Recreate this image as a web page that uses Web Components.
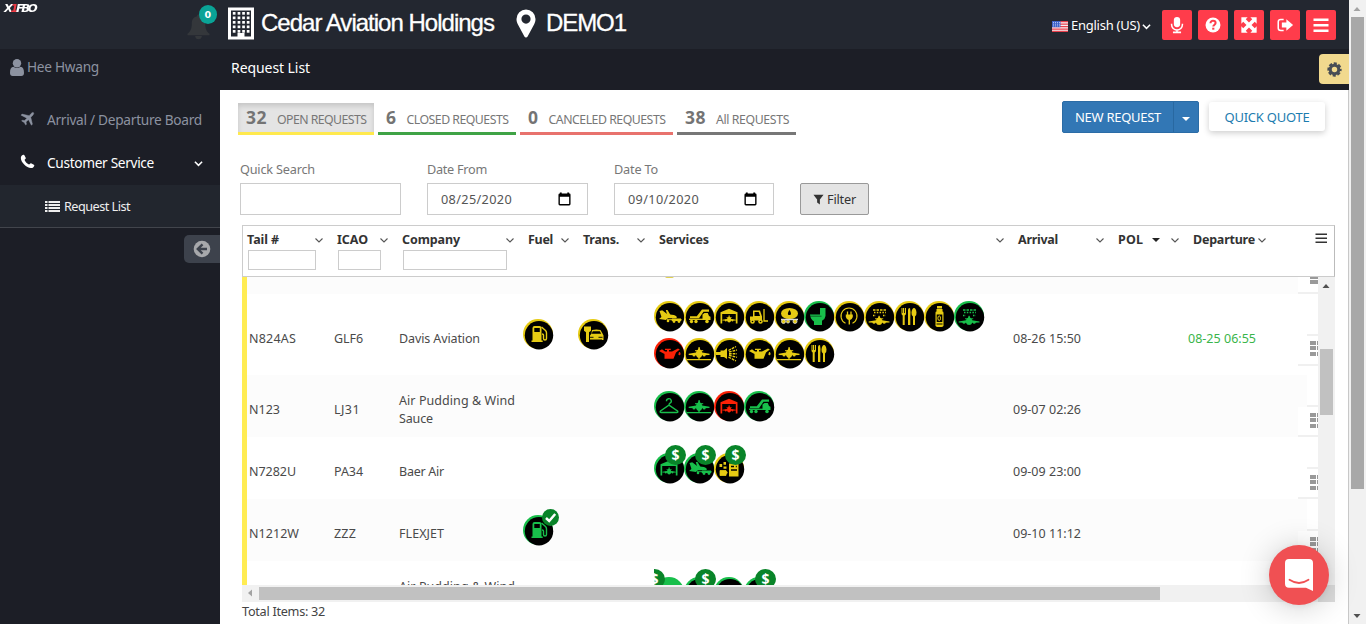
<!DOCTYPE html>
<html lang="en">
<head>
<meta charset="utf-8">
<title>Request List</title>
<style>
html,body{margin:0;height:624px;overflow:hidden;background:#fff}
body{font-family:"Noto Sans","Open Sans",sans-serif;font-size:13px;color:#444}
</style>
</head>
<body>
<fbo-app></fbo-app>
<script>
const define=(name,render,after)=>customElements.define(name,class extends HTMLElement{
  connectedCallback(){
    if(this.shadowRoot)return;
    this.attachShadow({mode:'open'}).innerHTML=render(this);
    if(after)after(this);
  }
});

/* Single-line label tracked to an exact width */
define('fit-text',()=>`<style>:host{display:inline-block;white-space:pre;flex:none}span{display:inline-block}</style><span><slot></slot></span>`,el=>{
  const w=+el.getAttribute('w'),s=el.shadowRoot.querySelector('span');
  if(!w)return;
  el.style.width=w+'px';
  s.style.letterSpacing=((w-s.getBoundingClientRect().width)/el.textContent.length)+'px';
});

/* Monochrome glyphs: [viewBox, markup] */
const G={
bell:['0 0 24 26','<path fill="currentColor" d="M12 0c1 0 1.600.7 1.600 1.700C17.500 2.500 19 5.700 19 9c0 6 1.500 8.500 4.500 11v1.500H.5V20C3.500 17.500 5 15 5 9c0-3.300 1.500-6.500 5.400-7.300C10.400.7 11 0 12 0zM8.500 22.300h7c0 2-1.500 3.500-3.500 3.500s-3.500-1.500-3.500-3.500z"/>'],
building:['0 0 26 32','<path fill="currentColor" fill-rule="evenodd" d="M0 0H26V32H0zM3 3V29H9.500V25.500H16.500V29H23V3z"/><g fill="currentColor">'+[4.500,9,13.500,18,22.500].map(y=>[4.800,9.600,14.200,18.800].map(x=>`<rect x="${x}" y="${y}" width="2.700" height="2.700"/>`).join('')).join('')+'</g>'],
pin:['0 0 20 28','<path fill="currentColor" fill-rule="evenodd" d="M10 0a9.500 9.500 0 0 1 9.500 9.500c0 2-.5 3.500-1.300 5.200L11.600 27c-.6 1.200-2.600 1.200-3.200 0L1.800 14.700C1 13 .5 11.500.5 9.500A9.500 9.500 0 0 1 10 0zm0 5a4.600 4.600 0 1 0 0 9.200A4.600 4.600 0 0 0 10 5z"/>'],
mic:['0 0 20 20','<rect x="6.500" y="1" width="7" height="11.500" rx="3.500" fill="currentColor"/><path fill="none" stroke="currentColor" stroke-width="1.700" d="M4 8.500v1.200a6 6 0 0 0 12 0V8.500M10 15.500V18M5.500 18.200h9"/>'],
help:['0 0 20 20','<circle cx="10" cy="10" r="8.300" fill="currentColor"/><path d="M7.200 8C7.200 6.200 8.400 5.300 10 5.300s2.900 1 2.900 2.500c0 1.800-2.600 1.900-2.600 4" fill="none" stroke="#ff3c4b" stroke-width="2.200"/><rect x="9.100" y="13" width="2.400" height="2.200" fill="#ff3c4b"/>'],
expand:['0 0 20 20','<path fill="currentColor" d="M1.500 1.500h7L6.400 3.600 10 7.200l3.600-3.600-2.100-2.100h7v7l-2.100-2.100L12.800 10l3.600 3.600 2.100-2.100v7h-7l2.100-2.100L10 12.800l-3.600 3.600 2.100 2.100h-7v-7l2.100 2.100L7.200 10 3.600 6.400 1.500 8.500z"/>'],
exit:['0 0 20 20','<path fill="none" stroke="currentColor" stroke-width="1.700" d="M8.500 4H5.300Q2.500 4 2.500 6.300v7.400Q2.500 16 5.300 16H8.500"/><path fill="currentColor" d="M6.500 7.300h5V3.500L19 10l-7.500 6.500v-3.800h-5z"/>'],
bars:['0 0 20 20','<path stroke="currentColor" stroke-width="2.500" d="M2.500 4.700h15M2.500 10.200h15M2.500 15.700h15"/>'],
gear:['0 0 20 20','<path fill="none" stroke="currentColor" stroke-width="4" stroke-dasharray="3.300 1.727" stroke-dashoffset="1.650" d="M16.400 10a6.400 6.400 0 1 1-12.800 0a6.400 6.400 0 1 1 12.800 0"/><circle cx="10" cy="10" r="5" fill="none" stroke="currentColor" stroke-width="3.600"/>'],
user:['0 0 14 17','<path fill="currentColor" d="M0 14c0-4 1-6 3.500-6.200 2 1.700 5 1.700 7 0C13 8 14 10 14 14c0 2-1 3-2.700 3H2.700C1 17 0 16 0 14z"/><circle cx="7" cy="4.200" r="4.200" fill="currentColor"/>'],
plane:['0 0 16 16','<path fill="currentColor" stroke="currentColor" stroke-width=".5" d="M15.300.7c.9.900.2 2.200-.8 3.200L12.300 6l1.900 8-1.200 1-3.300-6.200-2.800 2.700.5 2.600-.9.800-1.700-3-3-1.700.8-.8 2.600.4L7.900 7 1.200 3.600 2.300 2.400l8.200 1.800 2-2.300c1-1 2.100-1.900 2.800-1.200z"/>'],
phone:['0 0 16 16','<path fill="currentColor" d="M3.500.8C4 .6 4.400.7 4.700 1.300l1.500 3c.4.800-1.400 1.600-1.300 2.200.5 1.700 3 4.200 4.700 4.700.6.100 1.300-1.700 2.200-1.300l3 1.600c.5.300.6.600.4 1.100-.6 1.800-1.800 2.500-3.500 2.400C6.900 14.800 1 9 .9 4.300.9 2.600 1.700 1.400 3.500.8z"/>'],
chev:['0 0 10 10','<path fill="none" stroke="currentColor" stroke-width="1.700" d="M1 3l4 4 4-4"/>'],
chevs:['0 0 10 10','<path fill="none" stroke="currentColor" stroke-width="1.100" d="M1.500 3.500L5 7l3.500-3.500"/>'],
list:['0 0 15 13','<path stroke="currentColor" stroke-width="2" d="M0 2h2.500M3.500 2H15M0 5h2.500M3.500 5H15M0 8h2.500M3.500 8H15M0 11h2.500M3.500 11H15"/>'],
back:['0 0 18 18','<circle cx="9" cy="9" r="8.300" fill="currentColor"/><path fill="none" stroke="#3d424c" stroke-width="2.400" d="M14 9H5.500M9.500 4.300L4.800 9l4.700 4.700"/>'],
cal:['0 0 14 14','<path fill="currentColor" fill-rule="evenodd" d="M2 1V0h2v1h6V0h2v1h.500Q13.500 1 13.500 2.500v10q0 1.500-1.500 1.500H2Q.5 14 .5 12.500v-10Q.5 1 2 1zM2 4.500v8h10v-8z"/>'],
filter:['0 0 12 12','<path fill="currentColor" d="M.5.800h11L7.500 6v5.500L4.500 9.200V6z"/>'],
menu:['0 0 12 12','<path stroke="currentColor" stroke-width="1.600" d="M.5 2.200h11.500M.5 6.200h11.500M.5 10.200h11.500"/>'],
caret:['0 0 10 10','<path fill="currentColor" d="M1 3h8L5 7z"/>'],
up:['0 0 10 10','<path fill="currentColor" d="M1.500 7h7L5 3z"/>'],
left:['0 0 10 10','<path fill="currentColor" d="M7 1.500v7L3 5z"/>'],
flag:['0 0 16 11','<path fill="#f4f0f4" d="M0 0h16v11H0z"/><path stroke="#e8404c" stroke-width="1.200" d="M0 .600h16M0 3.100h16M0 5.600h16M0 8.100h16M0 10.400h16"/><path fill="#3c62c8" d="M0 0h8.500v6.200H0z"/><path stroke="#cbd8ff" stroke-width=".8" stroke-dasharray="1 1" d="M1 1.500h7M1 3.200h7M1 4.900h7"/>'],
chat:['0 0 28 32','<path fill="#fff" d="M4 0h20q4 0 4 4v28l-7-3.200H4q-4 0-4-4V4q0-4 4-4z"/><path d="M4.500 20.800q9.500 6.400 19 0" fill="none" stroke="#f05053" stroke-width="1.800" stroke-linecap="round"/>']
};
define('ui-glyph',el=>{const[v,m]=G[el.getAttribute('name')];return `<style>:host{display:inline-flex;flex:none;width:${el.getAttribute('w')||14}px;height:${el.getAttribute('h')||el.getAttribute('w')||14}px}svg{width:100%;height:100%;overflow:visible}</style><svg viewBox="${v}">${m}</svg>`});

/* Service artwork drawn inside a 30x30 disc; C is replaced by the status colour */
const front='<path d="M14.600 9h1l.6 2.500q1.800.8 2 3l7.300 1.300v1.200l-7.300.3q-.7 2.600-3.100 2.700-2.400-.1-3.100-2.700l-7.300-.3v-1.200l7.300-1.300q.2-2.200 2-3z"/><path d="M11 12.200h8.200v1H11z"/><circle cx="10" cy="17" r="1.500"/><circle cx="20.200" cy="17" r="1.500"/>';
const S={
fuel:'<path fill-rule="evenodd" d="M9.500 9q0-2 2-2h5q2 0 2 2v12.500h1.200V23H8.500v-1.500h1zM11.300 9v4h5.500V9z"/><path d="M18.500 8l4 3.500q1 1 1 2.500v5.500q0 1.500-1.500 1.500t-1.500-1.500V16q0-1-1.500-1" fill="none" stroke="C" stroke-width="1.400"/>',
car:'<path d="M6 7.500h7v4.200l-2 1.500V23H8V13.200L6 11.700z"/><path d="M14 11q4.500-1.200 8.500 0l2 3.500 1 2v4.500H12v-4.500l1.500-2z" fill="C"/><path d="M14.800 12.300h7l1.400 2.400h-9.700z" fill="#000"/><path d="M11.500 18.300h4M20.500 18.300h4M12 21h12" stroke="#000" stroke-width=".9"/>',
cargo:'<path d="M5.500 10l2.700-.8 5.300 4 6.500.8q2.500.7 3 2.200l-1 1H12l-4.500-1.200z"/><path d="M16.500 14l-3-5h-1.700l1.500 5zM8 15.500l8-.6-4 4-7-.8z"/><path d="M13 18.700h5M18 18h9v1.500h-9z" stroke="C"/><circle cx="14" cy="20" r="1.300"/><circle cx="20" cy="20.500" r="1.400"/><circle cx="25" cy="20.500" r="1.400"/>',
stairs:'<path d="M6 15.200h6.800L18 8.600h7v2.200h-5.500L15 17.300H6z"/><path d="M18.500 13.500l2-1.500h3.300l1.200 3 1.500.7v3.300h-8z"/><path d="M5 18.300h21" stroke="C" stroke-width="1.300"/><circle cx="7.500" cy="20.500" r="1.700"/><circle cx="12" cy="20.500" r="1.700"/><circle cx="23" cy="20.500" r="1.800"/>',
hangar:'<path d="M6.500 22.500V11.300L15 7.800l8.500 3.500v11.200h-1.700V13H8.200v9.500z"/><g transform="translate(5.300 8.500) scale(.65)">'+front+'</g>',
lift:'<path d="M9 9.500h7l2 6v4H6v-4h3z"/><path d="M10.500 11h4.200l1.300 4h-5.500z" fill="#000"/><path d="M20 8v12h4" fill="none" stroke="C" stroke-width="1.300"/><circle cx="8.500" cy="20.500" r="2.300"/><circle cx="16.500" cy="20.500" r="2.300"/><circle cx="8.500" cy="20.500" r=".8" fill="#000"/><circle cx="16.500" cy="20.500" r=".8" fill="#000"/>',
tank:'<ellipse cx="15.500" cy="12.500" rx="8.500" ry="5.500"/><path d="M15.500 9c2 3 2 5-.1 5s-2-2 .1-5z" fill="#000"/><path d="M7 18.500h17" stroke="#ddd" stroke-width="1.500"/><g stroke="#ddd" stroke-width=".8"><circle cx="9.500" cy="20.500" r="2"/><circle cx="14" cy="20.500" r="1.600"/><circle cx="21" cy="20.500" r="2"/></g>',
toilet:'<path d="M16 7h5.500v8q-.5 3.500-3.500 4.700V24h-8v-3.500Q6.500 18.500 6 13.500h10z"/><path d="M6 15.200h11.500" stroke="#000" stroke-width=".5"/>',
plug:'<path d="M11.500 22.200a8 8 0 1 1 7 0" fill="none" stroke="C" stroke-width="1.100"/><path d="M13.500 10.500v4M17 10.500v4" stroke="C" stroke-width="1.300"/><path d="M11.800 13.500h7v2.500q-.8 2.500-2.800 3v4.500h-1.400V19q-2-.5-2.800-3z"/>',
deice:'<g fill="none" stroke="C" stroke-width="1.300"><path d="M9 9h13" stroke-dasharray="2.500 1"/><path d="M10 11.500h12M9 14.500h3M19 14.500h3" stroke-dasharray="1.500 1.300"/></g><g transform="translate(0 7) scale(1 .85)">'+front+'</g>',
food:'<path d="M7.500 7v5.500q0 1.500 1.200 2V24h2v-9.500q1.300-.5 1.300-2V7h-1v5h-.8V7H9v5h-.5V7zM14 24V9q0-2 2-2 1 4 .300 9V24zM19 24v-8.500q-1.700-1-1.500-4Q18 7 20 7t2.500 4.500q.2 3-1.500 4V24z"/>',
oxygen:'<path d="M13 5h5v2.500h-5zM12.500 8h6v2h-6z"/><rect x="11.500" y="10" width="8" height="16" rx="1.800"/><rect x="12.700" y="13.500" width="5.600" height="7.500" fill="#000"/><ellipse cx="15.200" cy="17.200" rx="1.300" ry="2.300" fill="none" stroke="C"/><path d="M12.500 23h6" stroke="#000"/>',
oil:'<path d="M5 13l3-1.700 3 2.200h2V12h-2v-1.200h5.800V12h-1.800v1.500H18l6-3 1.800 1-3.800 3-2.500 6.300H10.500V16z"/><path d="M25.500 14q1.500 2.500 0 3t0-3z" stroke="C" stroke-width=".7"/>',
front:front+'<path d="M3 21.700h24M15 18v3" stroke="C" stroke-width="1.300"/>',
spray:'<path d="M1.500 14h5v-1.500H10L13 10v11l-3-2H6.500v-2h-5z"/><path d="M14.500 12.500L22 8.500M15 14l8-2M15 15.700h8M15 17.300l8 2M14.500 19L22 23" stroke="C" stroke-width="1.400" stroke-dasharray="2.700 1"/>',
hanger:'<path d="M12.500 10.200a2.400 2.400 0 1 1 3.500 2q-1 .5-1 2L6.500 20q-1 1.500.8 1.500h15.400q1.800 0 .8-1.500L15 14.200" fill="none" stroke="C" stroke-width="1.400"/>',
coffee:'<path d="M6 17.500h6v5H6zM12 18.500q2.500 0 0 3" stroke="C" stroke-width=".8"/><path d="M5.500 11h2.700v3H5.500zM9.500 9h2.500v2.700H9.500zM9.500 13.500h3v2.300h-3zM15 10.500h9.500v13H15z"/><path d="M17 13.500h3M17 17h6M21.800 13.500h1" stroke="#000" stroke-width="1.500"/>',
solid:''
};
const COL={y:'#e6cb13',g:'#18bf4b',r:'#fb2106'};
define('service-badge',el=>{
  const c=COL[el.getAttribute('c')],k=el.getAttribute('k'),m=el.getAttribute('m');
  const mark=m==='$'||m==='<'?`<i class="m"${m==='<'?' style="left:-10px"':''}>$</i>`:m==='v'?'<i class="m v"><svg viewBox="0 0 17 17"><path d="M4 9l3.200 3 6-7" fill="none" stroke="#fff" stroke-width="2.500"/></svg></i>':'';
  return `<style>:host{display:block;position:relative;flex:none;width:30px;height:30px;margin-bottom:7px}
  .a{display:block;width:31px;height:31px;overflow:visible}
  .m{position:absolute;left:11px;top:-8px;width:21px;height:20px;border-radius:50%;background:#098429;color:#fff;font:700 14px/20px "Noto Sans",sans-serif;text-align:center;z-index:2}
  .v{left:19px;top:-6px;width:17px;height:17px}.v svg{display:block}</style>
  <svg class="a" viewBox="0 0 31 31"><circle cx="15" cy="15" r="15" fill="${c}"/><circle cx="16" cy="16.200" r="14.200" fill="${k==='solid'?c:'#000'}"/><g fill="${c}">${S[k].replaceAll('"C"',`"${c}"`)}</g></svg>${mark}`;
});
const badges=s=>s?s.split(' ').map(t=>{const[k,c,m]=t.split(':');return `<service-badge k="${k}" c="${c}" m="${m||''}"></service-badge>`}).join(''):'';

define('top-bar',()=>`<style>
:host{display:flex;height:49px;background:#232730;color:#fff;align-items:flex-start}
.logo{width:187px;padding:2px 0 0 4px;box-sizing:border-box;font:italic 900 9px/12px "DejaVu Sans",sans-serif}
.logo fit-text{transform:scale(1.300,1.150);transform-origin:0 0} .logo b{color:#ef3b45;font-weight:inherit}
.bell{position:relative;width:41px;color:#34373b}.bell ui-glyph{margin-top:14px}
.n{position:absolute;left:11.500px;top:5px;width:18.500px;height:19px;border-radius:50%;background:#0aa396;color:#fff;font:700 9.500px/19px "DejaVu Sans",sans-serif;text-align:center}
.t{font:24px/28px "Liberation Sans",sans-serif;margin-top:9px;-webkit-text-stroke:.3px #fff}
.lang{display:flex;align-items:center;height:20px;margin:16px 11px 0 auto;font-size:13px}
.btns{display:flex;gap:6px;margin:10px 13px 0 0}
.btns span{width:30px;height:30px;border-radius:2px;background:#ff3c4b;display:grid;place-items:center}
</style><div class="logo"><fit-text w="34">X<b>1</b>FBO</fit-text></div>
<div class="bell"><ui-glyph name="bell" w="23" h="26"></ui-glyph><span class="n">0</span></div>
<ui-glyph name="building" w="26" h="33" style="margin-top:7px"></ui-glyph>
<fit-text class="t" w="233" style="margin-left:7px">Cedar Aviation Holdings</fit-text>
<ui-glyph name="pin" w="20" h="29" style="margin:9px 0 0 22px"></ui-glyph>
<fit-text class="t" w="80" style="margin-left:10px">DEMO1</fit-text>
<div class="lang"><ui-glyph name="flag" w="16" h="11"></ui-glyph><fit-text w="69" style="margin:-2px 2px 0 3px">English (US)</fit-text><ui-glyph name="chev" w="9"></ui-glyph></div>
<div class="btns">${['mic','help','expand','exit','bars'].map(n=>`<span><ui-glyph name="${n}" w="${n==='bars'?20:18}"></ui-glyph></span>`).join('')}</div>`);

define('side-nav',()=>`<style>
:host{display:block;width:220px;height:575px;background:#1c1e26;color:#8c92a0;font-size:13.700px;line-height:20px}
.u{display:flex;align-items:center;height:37px;box-sizing:border-box;padding-left:10px;gap:3px;margin-bottom:12px}
.u fit-text{margin-top:-1px}
.i{display:flex;align-items:center;height:43px;padding:0 17px 0 20px;gap:12px}
.i ui-glyph{margin-top:-2px}.i .c{margin-top:1px}
.on{color:#fff}.on .c{margin-left:auto}
.sub{height:43px;box-sizing:border-box;display:flex;align-items:center;padding-left:45px;gap:4px;background:#22262e;border-bottom:1px solid #42454c;color:#eee;font-size:12.700px;margin-top:1px}
.tg{width:36px;height:28px;border-radius:5px 0 0 5px;background:#3d424c;color:#a7a8ab;margin:7px 0 0 auto;display:grid;place-items:center}
</style><div class="u"><ui-glyph name="user" w="14" h="17"></ui-glyph><fit-text w="72">Hee Hwang</fit-text></div>
<div class="i"><ui-glyph name="plane" w="14"></ui-glyph><fit-text w="155" style="margin-left:1px">Arrival / Departure Board</fit-text></div>
<div class="i on"><ui-glyph name="phone" w="15"></ui-glyph><fit-text w="107">Customer Service</fit-text><ui-glyph class="c" name="chev" w="9"></ui-glyph></div>
<div class="sub"><ui-glyph name="list" w="15" h="13"></ui-glyph><fit-text w="66">Request List</fit-text></div>
<div class="tg"><ui-glyph name="back" w="18"></ui-glyph></div>`);

define('title-bar',()=>`<style>
:host{display:flex;justify-content:space-between;height:41px;background:#1c1e26;color:#fff;font-size:14px;line-height:20px}
fit-text{margin:9px 0 0 11px}
.g{width:30px;height:30px;margin-top:5px;border-radius:4px 0 0 4px;background:#f1d98e;color:#484d55;display:grid;place-items:center}
</style><fit-text w="79">Request List</fit-text><div class="g"><ui-glyph name="gear" w="17"></ui-glyph></div>`);

define('count-tab',el=>{const a=n=>el.getAttribute(n);return `<style>
:host{display:flex;box-sizing:border-box;width:${a('w')}px;height:32px;padding-left:8px;border-bottom:3px solid ${a('c')};color:#777;line-height:29px}
:host([on]){background:#e4e4e4;box-shadow:inset 0 3px 5px #0002}
.n{font-size:17.500px;font-weight:700;color:#747474}.t{font-size:12.300px;margin-left:10px;padding-top:2px}
</style><fit-text class="n" w="${a('nw')}">${a('n')}</fit-text><fit-text class="t" w="${a('tw')}">${a('label')}</fit-text>`});

define('request-toolbar',()=>`<style>
:host{display:flex;height:59px;padding:13px 23px 0 18px;box-sizing:border-box;gap:4px;align-items:flex-start}
.sp{flex:1}
.new{display:flex;box-sizing:border-box;width:137px;height:32px;margin:-2px 6px 0 0;background:#3277b5;border:1px solid #2b6ca6;border-radius:2px;color:#fff;line-height:31px;font-size:13px}
.new fit-text{margin-left:12px}.new i{border-left:1px solid #2868a1;margin-left:12px;width:24px;display:grid;place-items:center;padding-top:4px}
.qq{width:116px;height:29px;margin-top:-1px;border-radius:3px;box-shadow:0 2px 6px #0003;color:#1c7caf;line-height:30px;text-align:center;font-size:13px}
</style><count-tab on n="32" nw="21" w="136" tw="89.500" c="#ffe94d" label="OPEN REQUESTS"></count-tab>
<count-tab n="6" nw="10.500" w="138" tw="102" c="#3fa346" label="CLOSED REQUESTS"></count-tab>
<count-tab n="0" nw="10.500" w="153" tw="117" c="#e8726d" label="CANCELED REQUESTS"></count-tab>
<count-tab n="38" nw="21" w="119" tw="73" c="#777" label="All REQUESTS"></count-tab>
<div class="sp"></div><div class="new"><fit-text w="86">NEW REQUEST</fit-text><i><ui-glyph name="caret" w="10"></ui-glyph></i></div>
<div class="qq"><fit-text w="85">QUICK QUOTE</fit-text></div>`);

define('request-filters',()=>`<style>
:host{display:flex;gap:26px;padding:11px 0 0 20px;height:76px;box-sizing:border-box;color:#777;font-size:12.700px;line-height:18px}
.f{width:161px}.b{margin-top:5px;box-sizing:border-box;height:32px;border:1px solid #ccc;display:flex;align-items:center;justify-content:space-between;padding:0 16px 0 13px;color:#555;background:#fff}
.b ui-glyph{color:#000;margin-top:-1px}.go{width:69px;height:32px;box-sizing:border-box;margin-top:23px;border:1px solid #999;border-radius:2px;background:#e4e4e4;color:#333;display:flex;align-items:center;padding-left:12px;gap:3px}
</style><div class="f"><fit-text w="75">Quick Search</fit-text><div class="b"></div></div>
<div class="f"><fit-text w="60">Date From</fit-text><div class="b"><fit-text w="71">08/25/2020</fit-text><ui-glyph name="cal" w="13" h="14"></ui-glyph></div></div>
<div class="f" style="width:160px"><fit-text w="44">Date To</fit-text><div class="b"><fit-text w="71">09/10/2020</fit-text><ui-glyph name="cal" w="13" h="14"></ui-glyph></div></div>
<div class="go"><ui-glyph name="filter" w="11"></ui-glyph><fit-text w="29">Filter</fit-text></div>`);

const COLS='grid-template-columns:90px 65px 126px 55px 76px 359px 100px 75px 87px 1fr;';
define('grid-head',()=>`<style>
:host{display:grid;${COLS}box-sizing:border-box;height:52px;border:1px solid #ccc;border-right-color:#bbb;background:#fff;color:#333;font-weight:700;font-size:12.500px;line-height:18px}
.c{padding:5px 9px 0 4px}.r{display:flex;justify-content:space-between;align-items:center;height:18px}
.q{height:18px;border:1px solid #ccc;margin:1px 0 0 1px}
ui-glyph{color:#555}.m{padding:5px 7px 0 0;text-align:right}
</style>`+[['Tail #',32,67],['ICAO',31,42],['Company',58,103],['Fuel',25],['Trans.',36],['Services',50],['Arrival',40],['POL',25],['Departure',62]].map(([t,w,q])=>`<div class="c"><div class="r"><fit-text w="${w}">${t}</fit-text>${t==='POL'?'<ui-glyph name="caret" w="10" style="color:#222;margin-left:-2px"></ui-glyph>':''}<ui-glyph name="chevs" w="10"></ui-glyph></div>${q?`<div class="q" style="width:${q-1}px"></div>`:''}</div>`).join('')+`<div class="m"><ui-glyph name="menu" w="12" style="color:#333"></ui-glyph></div>`);

define('request-row',el=>{const a=n=>el.getAttribute(n)||'',h=+a('h');return `<style>
:host{display:grid;${COLS}grid-template-rows:${h}px;position:relative;box-sizing:border-box;height:${h}px;width:1076px;border-left:5px solid #ffec52;background:${a('bg')};color:#4a4a4a;font-size:12.500px;line-height:18px}
.c{padding-left:2px;display:flex;flex-direction:column;justify-content:center;align-items:flex-start;margin-top:${a('ty')||8}px}
.c:nth-of-type(n+2){margin-left:-5px}
.c:nth-of-type(n+5){margin-left:-7px}
.fu,.tr{margin:${a('iy')||16}px 0 0 -5.500px}
.s{display:flex;flex-wrap:wrap;align-content:flex-start;margin-left:-5px;padding-top:${a('sy')||16}px;overflow:hidden;height:100%;width:340px;box-sizing:border-box}
.top,.act{position:absolute;right:0}.top{width:11px;top:0;height:${Math.round(h/2)-1}px;border-bottom:2px solid #f0f0f0;background:#fff}
.act{width:20px;top:${Math.round(h/2)+1}px;height:28px;border-bottom:2px solid #f0f0f0;background:#fff;overflow:hidden}
.act i{position:absolute;left:12px;top:${h===81?5:6}px;width:14px;height:15px;background:repeating-linear-gradient(#999 0 4px,transparent 4px 5.300px);-webkit-mask:linear-gradient(90deg,#000 0 6px,transparent 6px 7px,#000 7px)}
</style><div class="c"><fit-text w="${a('tw')}">${a('tail')}</fit-text></div><div class="c"><fit-text w="${a('iw')}">${a('icao')}</fit-text></div>
<div class="c">${a('co').split('|').map(s=>{const[t,w]=s.split('~');return `<fit-text w="${w||0}">${t}</fit-text>`}).join('')}</div>
<div class="fu">${badges(a('fuel'))}</div><div class="tr">${badges(a('trans'))}</div><div class="s">${badges(a('sv'))}</div>
<div class="c"><fit-text w="68">${a('arr')}</fit-text></div><div></div><div class="c" style="color:#39b54a"><fit-text w="68">${a('dep')}</fit-text></div><div></div>
<div class="top"></div><div class="act"><i></i></div>`});

define('scroll-bar',el=>{const a=n=>el.getAttribute(n),v=!el.hasAttribute('horizontal');return `<style>
:host{display:flex;box-sizing:border-box;flex-direction:${v?'column':'row'};${v?'width:17px':'height:17px'};background:#f1f1f1;color:#505050}
ui-glyph{margin:${v?'4px 4px 3px 3px':'3px 4px 4px 3px'}}
b{background:${a('c')||'#c1c1c1'};${v?`width:13px;margin-left:2px;margin-top:${a('o')}px;height:${a('l')}px`:`height:13px;margin-top:2px;margin-left:${a('o')}px;width:${a('l')}px`}}
.d{margin-top:auto;transform:scaleY(-1)}
</style><ui-glyph name="${v?'up':'left'}" w="10" style="color:${a('ac')||'#505050'}"></ui-glyph><b></b>${v&&a('down')!==null?'<ui-glyph class="d" name="up" w="10"></ui-glyph>':''}`});

define('request-grid',()=>`<style>
:host{display:block;width:1093px;margin-left:22px}
.v{display:grid;grid-template-columns:1076px 17px;height:308px}
.rows{height:308px;overflow:hidden}
.h{display:grid;grid-template-columns:1076px 17px;height:17px}.k{background:#dcdcdc}
.pre{height:17px;background:#fcfcfc;border-left:5px solid #ffec52;position:relative;overflow:hidden}
.pre u{position:absolute;left:418px;top:-1px;width:9px;height:2px;border-radius:0 0 5px 5px;background:#e0d050}
.pre i{position:absolute;right:0;top:0;width:20px;height:14.500px;background:#fff;border-bottom:2px solid #f0f0f0}
.pre b{position:absolute;right:0;top:0;width:8px;height:7px;background:repeating-linear-gradient(#999 0 2px,transparent 2px 3px,#999 3px 7px)}
.tot{font-size:12.700px;line-height:18px;color:#444}
</style><grid-head></grid-head><div class="v"><div class="rows"><div class="pre"><u></u><i></i><b></b></div>
<request-row h="81" bg="#fff" tail="N824AS" tw="47" icao="GLF6" iw="29" co="Davis Aviation~81" arr="08-26 15:50" dep="08-25 06:55" iy="25" sy="7" fuel="fuel:y" trans="car:y" sv="cargo:y stairs:y hangar:y lift:y tank:y toilet:g plug:y deice:y food:y oxygen:y deice:g oil:r front:y spray:y oil:y front:y food:y"></request-row>
<request-row h="62" bg="#fcfcfc" tail="N123" tw="31" icao="LJ31" iw="26" co="Air Pudding &amp; Wind~116|Sauce~34" arr="09-07 02:26" sv="hanger:g front:g hangar:r stairs:g"></request-row>
<request-row h="62" bg="#fff" tail="N7282U" tw="47" icao="PA34" iw="29" co="Baer Air~45" arr="09-09 23:00" sv="hangar:g:$ cargo:g:$ coffee:y:$"></request-row>
<request-row h="62" bg="#fcfcfc" tail="N1212W" tw="50" icao="ZZZ" iw="22" co="FLEXJET~45" arr="09-10 11:12" iy="16" fuel="fuel:g:v"></request-row>
<request-row h="62" bg="#fff" ty="7" co="Air Pudding &amp; Wind~116|Sauce~34" sv="solid:g:&lt; hangar:g:$ hangar:g stairs:g:$"></request-row>
</div><scroll-bar o="55" l="66"></scroll-bar></div>
<div class="h"><scroll-bar horizontal o="0" l="901" ac="#a3a3a3"></scroll-bar><div class="k"></div></div>
<fit-text class="tot" w="83">Total Items: 32</fit-text>`);

define('fbo-app',()=>`<style>
:host{display:grid;grid-template-columns:1349px 17px;height:624px;overflow:hidden}
.body{display:grid;grid-template-columns:220px 1129px}
main{height:534px;background:#fff;border-right:1px solid #c8c8c8;box-sizing:border-box}
.chat{position:absolute;left:1269px;top:545px;width:60px;height:60px;border-radius:50%;background:#f05053;box-shadow:0 1px 6px #0001,0 2px 32px #0003;display:grid;place-items:center;z-index:5}
</style><div><top-bar></top-bar><div class="body"><side-nav></side-nav><div><title-bar></title-bar><main><request-toolbar></request-toolbar><request-filters></request-filters><request-grid></request-grid></main></div></div></div>
<scroll-bar o="0" l="472" c="#a8a8a8" ac="#a3a3a3" down></scroll-bar>
<div class="chat"><ui-glyph name="chat" w="28" h="32"></ui-glyph></div>`);
</script>
</body>
</html>
